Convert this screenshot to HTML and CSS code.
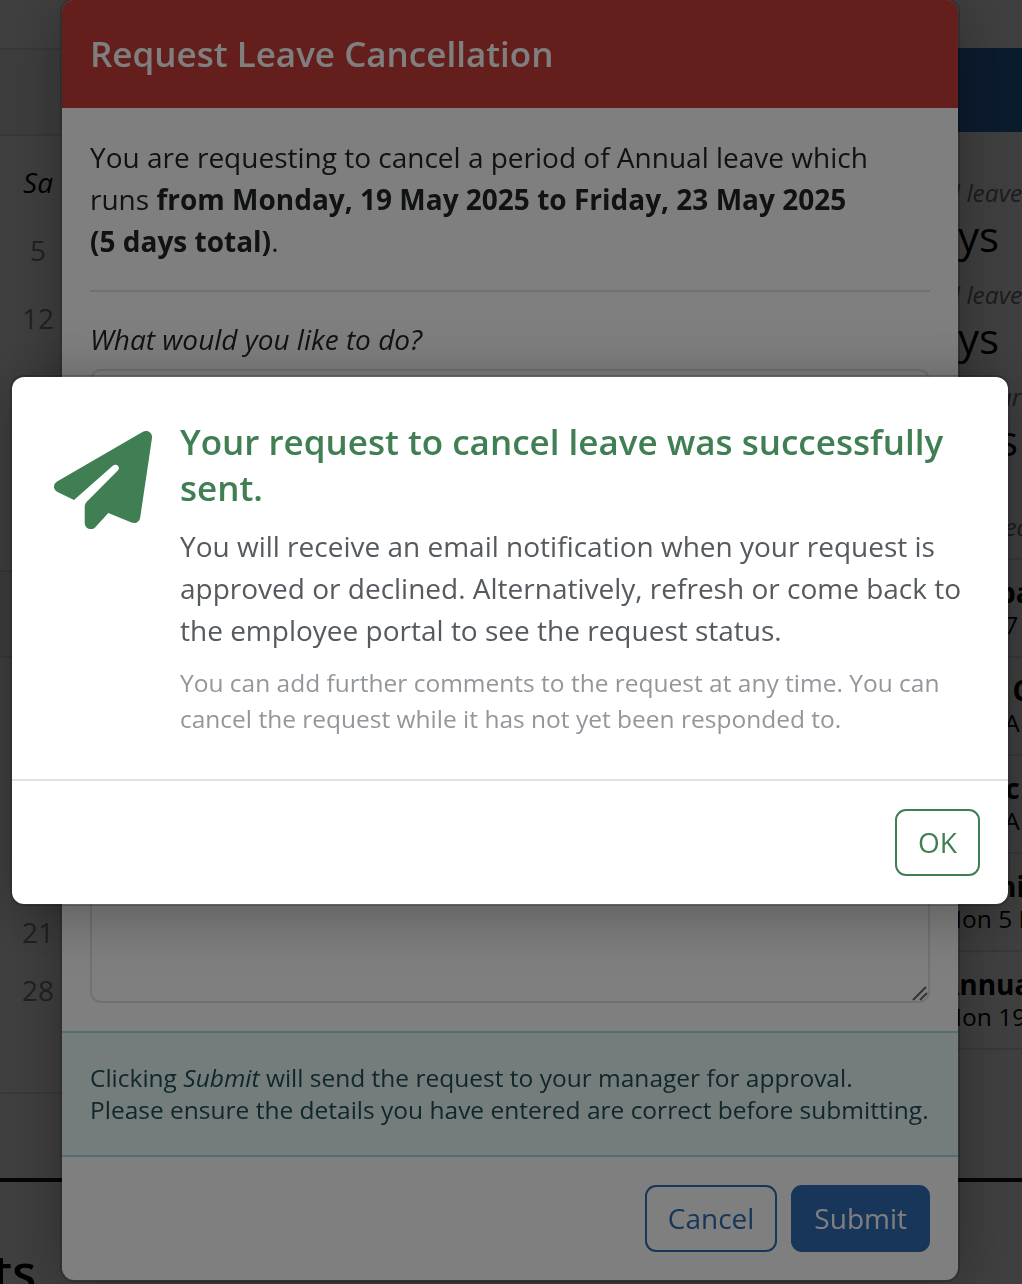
FILE: index.html
```html
<!DOCTYPE html>
<html lang="en">
<head>
	<meta charset="utf-8">
	<title>Request Leave Cancellation</title>
	<link rel="stylesheet" href="styles.css">
</head>
<body>
	<div class="page">
		<div class="columns">
			<div class="calendar">
				<div class="month">
					<div class="month-head"></div>
					<table class="days">
						<tr><th>Sa</th></tr>
						<tr><td>5</td></tr>
						<tr><td>12</td></tr>
						<tr><td>19</td></tr>
						<tr><td>26</td></tr>
					</table>
				</div>
				<div class="month short">
					<div class="month-head"></div>
					<table class="days">
						<tr><th>Sa</th></tr>
						<tr><td></td></tr>
						<tr><td>7</td></tr>
						<tr><td>14</td></tr>
						<tr><td>21</td></tr>
						<tr><td>28</td></tr>
					</table>
				</div>
			</div>

			<div class="summary">
				<div class="summary-head"></div>
				<dl class="totals">
					<dt>al leave</dt>
					<dd>ys</dd>
					<dt>al leave</dt>
					<dd>ys</dd>
					<dt class="inset">ar</dt>
					<dd class="inset">s</dd>
				</dl>
				<p class="note inset">&nbsp;ed</p>
				<ul class="events">
					<li><b class="inset">ba</b><span class="inset">&nbsp;7</span></li>
					<li><b class="inset">&nbsp;&nbsp;C</b><span class="inset">&nbsp;A</span></li>
					<li><b class="inset">&nbsp;c</b><span class="inset">&nbsp;A</span></li>
					<li><b class="inset">nic</b><span>Mon 5 May</span></li>
					<li><b>Annual</b><span>Mon 19</span></li>
				</ul>
			</div>
		</div>
		<h2 class="section-title">Requests</h2>
	</div>

	<div class="layer">
		<form class="modal">
			<div class="modal-head">
				<h1>Request Leave Cancellation</h1>
			</div>
			<div class="modal-body">
				<p>You are requesting to cancel a period of Annual leave which runs <b>from Monday, 19 May 2025 to Friday, 23 May 2025 (5&nbsp;days total)</b>.</p>
				<hr>
				<label for="action">What would you like to do?</label>
				<select id="action" class="field">
					<option></option>
				</select>
				<div class="comments">
					<textarea class="field" aria-label="Comments"></textarea>
					<svg class="grip" width="16" height="16" viewBox="0 0 16 16">
						<path d="M1 15L14 2M8 15L15 8" fill="none" stroke="#666" stroke-width="2"/>
					</svg>
				</div>
			</div>
			<div class="info">
				Clicking <i>Submit</i> will send the request to your manager for approval.<br>
				Please ensure the details you have entered are correct before submitting.
			</div>
			<div class="modal-foot">
				<button type="button" class="btn btn-outline">Cancel</button>
				<button type="submit" class="btn btn-primary">Submit</button>
			</div>
		</form>
	</div>

	<div class="layer">
		<div class="modal modal-wide" role="dialog" aria-labelledby="sent">
			<div class="message">
				<svg class="plane" width="98" height="98" viewBox="0 0 98 98">
					<path d="M88.5 1C93-1.500 98.700 1.500 98 7L86.200 86.500C85.500 91 81.500 93 77.500 91.500L54.300 82L42 95.500C38 100.500 30.700 98 30.700 92V75.500Q30.700 73 32.500 71L63.800 39.500C67 36 62.500 31.500 58.500 35L20 69L4 61.200C-1.300 58.500-1.300 53 3.500 50.200Z" fill="#407f53"/>
				</svg>
				<div class="message-text">
					<h2 id="sent">Your request to cancel leave was successfully sent.</h2>
					<p>You will receive an email notification when your request is approved or declined. Alternatively, refresh or come back to the employee portal to see the request status.</p>
					<p class="small">You can add further comments to the request at any time. You can cancel the request while it has not yet been responded to.</p>
				</div>
			</div>
			<div class="modal-foot ruled">
				<button type="button" class="btn btn-success">OK</button>
			</div>
		</div>
	</div>
</body>
</html>
```
FILE: styles.css
```css
*{
	box-sizing: border-box;
	margin: 0;
	padding: 0;
}
html{
	font-size: 28px;
}
body{
	height: 100vh;
	overflow: hidden;
	font-family: "Open Sans", "Noto Sans", sans-serif;
	line-height: 42px;
	color: #212529;
	background: #fff;
}
ul{
	list-style: none;
}

/* page behind */
.page{
	padding-top: 48px;
	color: #000;
}
.columns{
	display: flex;
	justify-content: space-between;
	height: 1134px;
	border-bottom: 4px solid #14171a;
}
.calendar{
	width: 62px;
}
.month{
	padding-bottom: 82px;
}
.month-head{
	height: 88px;
	border-top: 2px solid #dee2e6;
	border-bottom: 2px solid #dee2e6;
	background: #f7f7f7;
}
.days{
	width: 48px;
	margin: 12px 0 0 14px;
	border-collapse: collapse;
	text-align: center;
}
.days tr{
	height: 68px;
}
.days th{
	font-weight: normal;
	font-style: italic;
}
.days td{
	color: #888;
}
.short{
	padding-bottom: 73px;
	border-bottom: 2px solid #dee2e6;
}
.short .days{
	margin-top: 13px;
}
.short .days tr{
	height: 58px;
}
.summary{
	width: 82px;
	white-space: nowrap;
	overflow: hidden;
}
.summary-head{
	height: 84px;
	margin-bottom: 43px;
	background: #2d6cb8;
}
.totals dt,
.note{
	font-size: .875rem;
	font-style: italic;
	line-height: 36px;
	color: #6c757d;
}
.totals dd{
	margin-bottom: 16px;
	font-size: 42px;
	line-height: 50px;
	text-indent: 18px;
}
.note{
	margin: 44px 0 13px;
}
.events{
	border-bottom: 2px solid #dee2e6;
}
.events li{
	height: 98px;
	padding: 15px 0;
	border-top: 2px solid #dee2e6;
}
.events b{
	display: block;
	line-height: 34px;
}
.events span{
	display: block;
	font-size: .875rem;
	line-height: 32px;
}
.summary .inset{
	text-indent: 58px;
}
.section-title{
	display: flex;
	justify-content: flex-end;
	width: 36px;
	margin-top: 60px;
	font-size: 49px;
	font-weight: 600;
	line-height: 60px;
}

/* dialogs */
.layer{
	position: fixed;
	top: 0;
	right: 0;
	bottom: 0;
	left: 0;
	display: flex;
	align-items: center;
	justify-content: center;
	padding: 0 2px 4px 0;
	background: rgba(0,0,0,.5);
}
.modal{
	width: 900px;
	max-width: 100%;
	overflow: hidden;
	border: 2px solid rgba(0,0,0,.2);
	border-radius: 14px;
	background: #fff;
	background-clip: padding-box;
	box-shadow: 0 8px 60px rgba(0,0,0,.3);
}
.modal-wide{
	width: 1000px;
}
.modal-head{
	padding: 28px;
	color: #fff;
	background: #c83c38;
}
.modal-head h1{
	font-size: 35px;
	font-weight: 600;
	line-height: 52px;
}
.modal-body{
	padding: 28px;
}
.modal-body hr{
	margin: 28px 0 26px;
	border: 0;
	border-top: 2px solid #dee2e6;
}
.modal-body label{
	display: block;
	margin-bottom: 9px;
	font-style: italic;
}
.field{
	display: block;
	width: 100%;
	border: 2px solid #dee2e6;
	border-radius: 11px;
	background: #fff;
	font: inherit;
}
select.field{
	height: 67px;
	margin-bottom: 28px;
	appearance: none;
}
.comments{
	position: relative;
}
textarea.field{
	height: 539px;
	resize: none;
}
.grip{
	position: absolute;
	right: 2px;
	bottom: 2px;
}
.info{
	padding: 29px 28px;
	border-top: 2px solid #a6dce2;
	border-bottom: 2px solid #a6dce2;
	background: #eaf8f8;
	font-size: .875rem;
	line-height: 32px;
	color: #205058;
}
.modal-foot{
	display: flex;
	justify-content: flex-end;
	gap: 14px;
	padding: 28px;
}
.ruled{
	border-top: 2px solid #dee2e6;
}
.btn{
	padding: 11px 21px;
	border: 2px solid;
	border-radius: 11px;
	background: #fff;
	font: inherit;
	line-height: 41px;
}
.btn-outline{
	border-color: #306cb4;
	color: #306cb4;
}
.btn-primary{
	border-color: #306cb4;
	background: #306cb4;
	color: #fff;
}
.btn-success{
	border-color: #407f53;
	color: #407f53;
}
.message{
	display: flex;
	gap: 28px;
	padding: 42px;
}
.plane{
	flex: none;
	margin-top: 12px;
}
.message-text h2{
	margin-bottom: 14px;
	font-size: 35px;
	font-weight: 600;
	line-height: 46px;
	color: #407f53;
}
.message-text p{
	color: #555a5f;
}
.message-text .small{
	margin-top: 14px;
	font-size: .875rem;
	line-height: 36px;
	color: #92979c;
}
```
